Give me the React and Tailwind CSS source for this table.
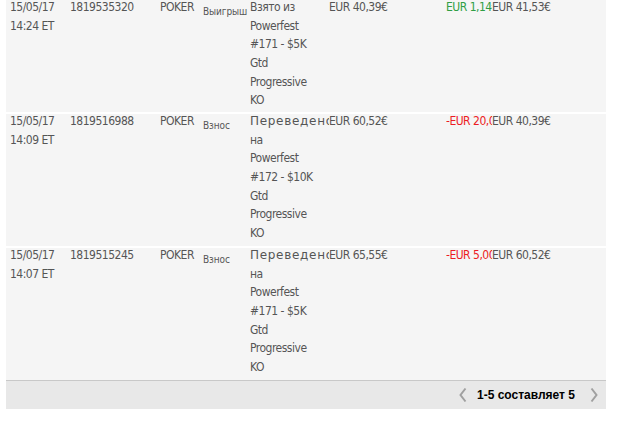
import React from "react";

const rows = [
  {
    date: "15/05/17",
    time: "14:24 ET",
    id: "1819535320",
    type: "Выигрыш",
    desc: ["Взято из", "Powerfest", "#171 - $5K", "Gtd", "Progressive", "KO"],
    amount: "EUR 40,39€",
    change: "EUR 1,14€",
    pos: true,
    balance: "EUR 41,53€",
    h: "h-[112px]",
  },
  {
    date: "15/05/17",
    time: "14:09 ET",
    id: "1819516988",
    type: "Взнос",
    desc: ["Переведено", "на", "Powerfest", "#172 - $10K", "Gtd", "Progressive", "KO"],
    amount: "EUR 60,52€",
    change: "-EUR 20,00€",
    pos: false,
    balance: "EUR 40,39€",
    h: "h-[132px]",
  },
  {
    date: "15/05/17",
    time: "14:07 ET",
    id: "1819515245",
    type: "Взнос",
    desc: ["Переведено", "на", "Powerfest", "#171 - $5K", "Gtd", "Progressive", "KO"],
    amount: "EUR 65,55€",
    change: "-EUR 5,00€",
    pos: false,
    balance: "EUR 60,52€",
    h: "h-[132px]",
  },
];

function Chevron({ dir }) {
  return (
    <svg width="8" height="16" viewBox="0 0 8 16" className="block">
      {dir === "left" ? (
        <polyline points="6.5,1.5 1.5,8 6.5,14.5" fill="none" stroke="#a0a0a0" strokeWidth="2" />
      ) : (
        <polyline points="1.5,1.5 6.5,8 1.5,14.5" fill="none" stroke="#a0a0a0" strokeWidth="2" />
      )}
    </svg>
  );
}

export default function App() {
  return (
    <div className="w-[617px] h-[424px] bg-white overflow-hidden">
      <div
        className="ml-[6px] w-[600px] flex flex-col gap-[2px] text-[#555555] text-[12px] leading-[18.67px] tracking-[-0.5px]"
        style={{ fontFamily: '"DejaVu Sans Condensed", "DejaVu Sans", sans-serif' }}
      >
        {rows.map((r, i) => (
          <div key={i} className={`flex bg-[#f5f5f5] ${r.h}`}>
            <div className="flex w-full -mt-[2px]">
              <div className="w-[60px] pl-[4px] shrink-0">
                <div>{r.date}</div>
                <div>{r.time}</div>
              </div>
              <div className="w-[90px] pl-[4px] shrink-0">{r.id}</div>
              <div className="w-[43px] pl-[4px] shrink-0">POKER</div>
              <div className="w-[47px] pl-[4px] pt-[5px] shrink-0 text-[10px] leading-[18px] tracking-[-0.1px] whitespace-nowrap">
                {r.type}
              </div>
              <div className="w-[83px] pl-[4px] shrink-0 overflow-hidden">
                {r.desc.map((l, j) =>
                  l === "Переведено" ? (
                    <div
                      key={j}
                      className="whitespace-nowrap tracking-[0.7px]"
                      style={{ fontFamily: '"DejaVu Sans", sans-serif' }}
                    >
                      {l}
                    </div>
                  ) : (
                    <div key={j} className="whitespace-nowrap">
                      {l}
                    </div>
                  )
                )}
              </div>
              <div className="w-[117px] shrink-0 whitespace-nowrap">{r.amount}</div>
              <div
                className={`w-[46px] shrink-0 overflow-hidden whitespace-nowrap ${
                  r.pos ? "text-[#2f9e44]" : "text-[#ec1c24]"
                }`}
              >
                {r.change}
              </div>
              <div className="flex-1 whitespace-nowrap">{r.balance}</div>
            </div>
          </div>
        ))}
        <div className="-mt-[2px] h-[29px] border-t border-[#c8c8c8] bg-[#e8e8e8] flex items-center justify-end pr-[8px] tracking-normal">
          <Chevron dir="left" />
          <span
            className="ml-[10px] mr-[15px] text-black font-bold text-[12px]"
            style={{ fontFamily: '"Liberation Sans", Arial, sans-serif' }}
          >
            1-5 составляет 5
          </span>
          <Chevron dir="right" />
        </div>
      </div>
    </div>
  );
}
